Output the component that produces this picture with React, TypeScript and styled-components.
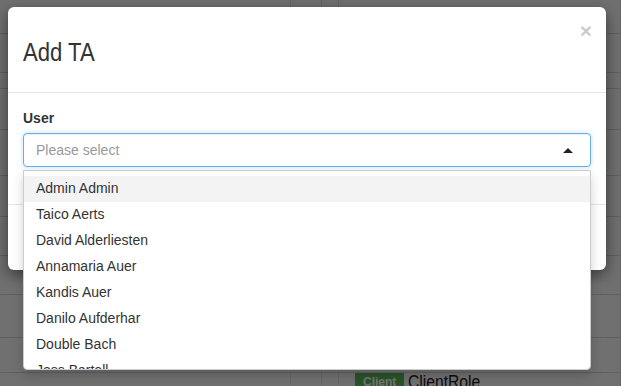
import React from "react";
import styled, { createGlobalStyle } from "styled-components";

const GlobalStyle = createGlobalStyle`
  html, body { margin: 0; padding: 0; }
  body {
    width: 621px;
    height: 386px;
    overflow: hidden;
    font-family: "Liberation Sans", Arial, Helvetica, sans-serif;
    font-size: 14px;
    color: #333;
    background: #fff;
  }
`;

const Page = styled.div`
  position: relative;
  width: 621px;
  height: 386px;
  overflow: hidden;
  background: #f8f8f8;
`;

const BgRow = styled.div<{ $h: number }>`
  height: ${(p) => p.$h}px;
  border-bottom: 1px solid #d4d4d4;
  box-sizing: border-box;
  display: flex;
`;

const BgCell = styled.div<{ $w: number }>`
  width: ${(p) => p.$w}px;
  height: 100%;
  border-right: 1px solid #e2e2e2;
  box-sizing: border-box;
  display: flex;
  align-items: flex-start;
  padding: 0 0 0 16px;
`;

const Badge = styled.span`
  background: #5cb85c;
  color: #fff;
  font-weight: bold;
  font-size: 12px;
  padding: 2px 8px 1px;
  margin: 0 4px 0 0;
  line-height: 15px;
`;

const RoleText = styled.span`
  display: inline-block;
  font-size: 18px;
  color: #222;
  line-height: 18px;
  transform: scaleX(0.87);
  transform-origin: left center;
`;

const Overlay = styled.div`
  position: absolute;
  inset: 0;
  background: rgba(0, 0, 0, 0.55);
`;

const Dialog = styled.div`
  position: absolute;
  left: 8px;
  top: 7px;
  width: 598px;
  height: 263px;
  background: #fff;
  border-radius: 6px;
  box-shadow: 0 5px 15px rgba(0, 0, 0, 0.5);
  display: flex;
  flex-direction: column;
`;

const Header = styled.div`
  height: 86px;
  box-sizing: border-box;
  border-bottom: 1px solid #e5e5e5;
  padding: 0 15px;
  display: flex;
  align-items: flex-start;
  justify-content: space-between;
`;

const Title = styled.h4`
  margin: 30px 0 0;
  font-family: "Liberation Sans", Arial, sans-serif;
  font-weight: normal;
  font-size: 26px;
  line-height: 30px;
  color: #333;
  transform: scaleX(0.85);
  transform-origin: left center;
`;

const Close = styled.button`
  border: 0;
  background: none;
  padding: 0;
  margin: 13px -1px 0 0;
  font-family: "Liberation Sans", Arial, sans-serif;
  font-size: 21px;
  font-weight: bold;
  line-height: 21px;
  color: #000;
  opacity: 0.2;
`;

const Body = styled.div`
  padding: 15px 15px 0;
  height: 111px;
  box-sizing: border-box;
  position: relative;
  z-index: 2;
`;

const Label = styled.label`
  display: block;
  font-weight: bold;
  line-height: 20px;
  margin-bottom: 5px;
  color: #333;
`;

const SelectWrap = styled.div`
  position: relative;
`;

const SelectBox = styled.div`
  height: 34px;
  box-sizing: border-box;
  border: 1px solid #66afe9;
  border-radius: 4px;
  box-shadow: inset 0 1px 1px rgba(0, 0, 0, 0.075), 0 0 5px rgba(102, 175, 233, 0.4);
  padding: 0 12px;
  display: flex;
  align-items: center;
  justify-content: space-between;
  background: #fff;
`;

const Placeholder = styled.span`
  color: #999;
  line-height: 20px;
`;

const Caret = styled.span`
  width: 0;
  height: 0;
  border-left: 5px solid transparent;
  border-right: 5px solid transparent;
  border-bottom: 5px solid #222;
  margin-right: 5px;
`;

const Menu = styled.ul`
  position: absolute;
  left: 0;
  right: 0;
  top: 37px;
  margin: 0;
  padding: 5px 0 0;
  list-style: none;
  height: 200px;
  box-sizing: border-box;
  overflow-y: scroll;
  background: #fff;
  border: 1px solid #ccc;
  border-radius: 0 0 4px 4px;
  box-shadow: 0 6px 12px rgba(0, 0, 0, 0.175);

  &::-webkit-scrollbar {
    width: 12px;
  }
  &::-webkit-scrollbar-track {
    background: #f1f1f1;
    border-left: 1px solid #e8e8e8;
  }
  &::-webkit-scrollbar-thumb {
    background: #c1c1c1;
    border-radius: 6px;
    border: 3px solid #f1f1f1;
  }
`;

const Item = styled.li<{ $active?: boolean }>`
  height: 26px;
  box-sizing: border-box;
  padding: 2px 12px 4px;
  line-height: 20px;
  color: #333;
  background: ${(p) => (p.$active ? "#f3f3f3" : "#fff")};
  white-space: nowrap;
`;

const Footer = styled.div`
  flex: 1;
  border-top: 1px solid #e5e5e5;
`;

const names = [
  "Admin Admin",
  "Taico Aerts",
  "David Alderliesten",
  "Annamaria Auer",
  "Kandis Auer",
  "Danilo Aufderhar",
  "Double Bach",
  "Jess Bartell",
  "Luann Bashirian",
  "Mickey Bauch",
  "Otto Bayer",
  "Lela Bechtelar",
  "Rosendo Becker",
  "Hilda Bednar",
  "Karl Beer",
  "Wilma Bergnaum",
  "Ezra Bernhard",
  "Ona Bernier",
  "Dane Blanda",
  "Myra Bode",
  "Tobias Bogan",
  "Ines Bogisich",
  "Ari Borer",
  "Nell Bosco",
  "Cody Botsford",
  "Ivy Boyer",
  "Jude Bradtke",
  "Lana Brakus",
  "Omar Braun",
  "Pia Breitenberg",
  "Remy Brekke",
  "Sara Brown",
  "Theo Buckridge",
  "Uma Carroll",
  "Vito Carter",
  "Wes Cartwright",
  "Xena Cassin",
  "Yara Champlin",
  "Zeke Christiansen",
  "Abel Cole",
  "Bea Collier",
  "Cruz Collins",
  "Dora Conn",
];

const bgRows: { h: number; content?: boolean }[] = [
  { h: 34 },
  { h: 39 },
  { h: 16 },
  { h: 41 },
  { h: 46 },
  { h: 41 },
  { h: 39 },
  { h: 39 },
  { h: 43 },
  { h: 35 },
  { h: 30, content: true },
];

export default function App() {
  return (
    <>
      <GlobalStyle />
      <Page>
        {bgRows.map((r, i) => (
          <BgRow key={i} $h={r.h}>
            <BgCell $w={292} />
            <BgCell $w={31} />
            <BgCell $w={15} />
            <BgCell $w={283}>
              {r.content && (
                <>
                  <Badge>Client</Badge>
                  <RoleText>ClientRole</RoleText>
                </>
              )}
            </BgCell>
          </BgRow>
        ))}
        <Overlay />
        <Dialog>
          <Header>
            <Title>Add TA</Title>
            <Close aria-label="Close">×</Close>
          </Header>
          <Body>
            <Label>User</Label>
            <SelectWrap>
              <SelectBox>
                <Placeholder>Please select</Placeholder>
                <Caret />
              </SelectBox>
              <Menu>
                {names.map((n, i) => (
                  <Item key={n} $active={i === 0}>
                    {n}
                  </Item>
                ))}
              </Menu>
            </SelectWrap>
          </Body>
          <Footer />
        </Dialog>
      </Page>
    </>
  );
}
